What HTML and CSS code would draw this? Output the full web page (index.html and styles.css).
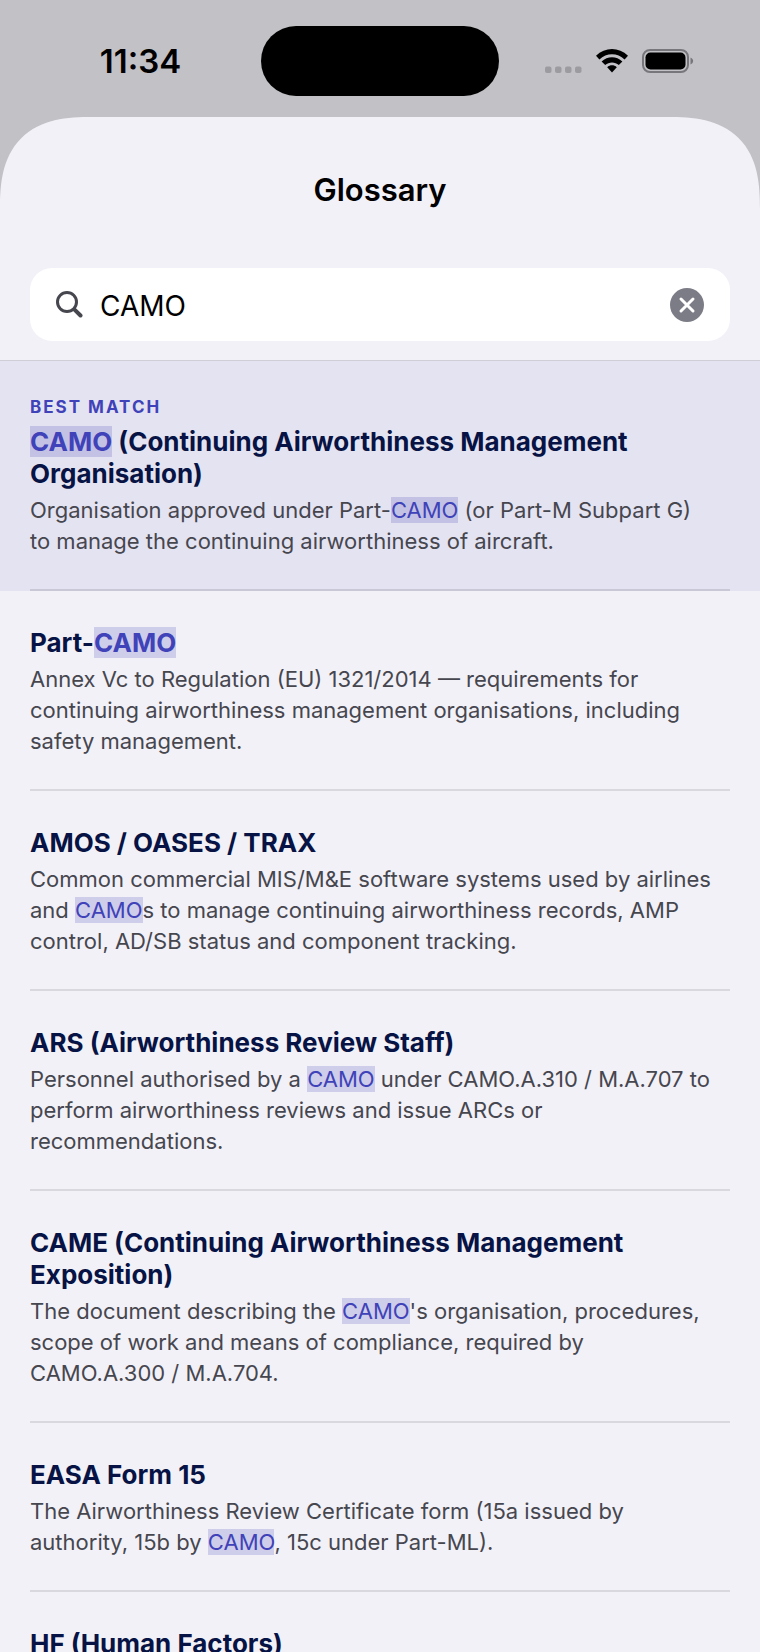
FILE: index.html
```html
<!DOCTYPE html>
<html lang="en">
  <head>
    <meta charset="UTF-8" />
    <meta name="viewport" content="width=device-width, initial-scale=1.0" />
    <title>Glossary</title>
    <link rel="stylesheet" href="styles.css">
  </head>
  <body>
    <div class="screen">
      <!-- Status bar -->
      <div class="status-bar">
        <div class="status-left">
          <span class="time">11:34</span>
        </div>
        <div class="island"></div>
        <div class="status-right">
          <svg class="cellular" width="37" height="24" viewBox="0 0 37 24" aria-hidden="true">
            <rect x="0" y="17.500" width="6.500" height="6.500" rx="2" />
            <rect x="10" y="17.500" width="6.500" height="6.500" rx="2" />
            <rect x="20" y="17.500" width="6.500" height="6.500" rx="2" />
            <rect x="30" y="17.500" width="6.500" height="6.500" rx="2" />
          </svg>
          <svg class="wifi" width="32" height="24" viewBox="0 0 32 24" aria-hidden="true">
            <path d="M0 6.8C9-2.2 23-2.2 32 6.8L28.6 10.4C21.500 3.400 10.500 3.400 3.400 10.400Z" />
            <path d="M5.600 12.500C11.500 6.700 20.500 6.700 26.400 12.500L22.800 16.100C19 12.500 13 12.500 9.200 16.100Z" />
            <path d="M11.200 18.200C14 15.700 18 15.700 20.800 18.200L16 23.400Z" />
          </svg>
          <svg class="battery" width="52" height="24" viewBox="0 0 52 24" aria-hidden="true">
            <rect class="battery-case" x="1" y="1" width="45" height="22" rx="7" />
            <rect x="3.500" y="3.500" width="40" height="17" rx="5" />
            <path class="battery-tip" d="M48.500 8.500C52 10 52 14 48.500 15.500Z" />
          </svg>
        </div>
      </div>

      <main class="sheet">
        <header class="sheet-header">
          <h1>Glossary</h1>
          <form class="search" role="search">
            <svg width="27" height="27" viewBox="0 0 27 27" aria-hidden="true">
              <circle cx="11" cy="11" r="9.500" />
              <path class="handle" d="M18.300 18.300L24.500 24.500" />
            </svg>
            <input type="text" value="CAMO" aria-label="Search glossary" />
            <button type="reset" class="clear-btn" aria-label="Clear search">
              <svg width="34" height="34" viewBox="0 0 34 34" aria-hidden="true">
                <circle cx="17" cy="17" r="17" />
                <path d="M11 11L23 23M23 11L11 23" />
              </svg>
            </button>
          </form>
        </header>

        <!-- Search results -->
        <section class="results">
          <article class="entry best">
            <p class="label">BEST MATCH</p>
            <h2><mark>CAMO</mark> (Continuing Airworthiness Management Organisation)</h2>
            <p>Organisation approved under Part-<mark>CAMO</mark> (or Part-M Subpart G) to manage the continuing airworthiness of aircraft.</p>
          </article>
          <article class="entry">
            <h2>Part-<mark>CAMO</mark></h2>
            <p>Annex Vc to Regulation (EU) 1321/2014 — requirements for continuing airworthiness management organisations, including safety management.</p>
          </article>
          <article class="entry">
            <h2>AMOS / OASES / TRAX</h2>
            <p>Common commercial MIS/M&amp;E software systems used by airlines and <mark>CAMO</mark>s to manage continuing airworthiness records, AMP control, AD/SB status and component tracking.</p>
          </article>
          <article class="entry">
            <h2>ARS (Airworthiness Review Staff)</h2>
            <p>Personnel authorised by a <mark>CAMO</mark> under CAMO.A.310 / M.A.707 to perform airworthiness reviews and issue ARCs or recommendations.</p>
          </article>
          <article class="entry">
            <h2>CAME (Continuing Airworthiness Management Exposition)</h2>
            <p>The document describing the <mark>CAMO</mark>'s organisation, procedures, scope of work and means of compliance, required by CAMO.A.300 / M.A.704.</p>
          </article>
          <article class="entry">
            <h2>EASA Form 15</h2>
            <p>The Airworthiness Review Certificate form (15a issued by authority, 15b by <mark>CAMO</mark>, 15c under Part-ML).</p>
          </article>
          <article class="entry">
            <h2>HF (Human Factors)</h2>
          </article>
        </section>
      </main>
    </div>
  </body>
</html>
```
FILE: styles.css
```css
* {
  box-sizing: border-box;
}

body {
  margin: 0;
  font-family: Inter, "Liberation Sans", sans-serif;
  background: #c2c1c6;
  color: #000;
}

.screen {
  display: flex;
  flex-direction: column;
  height: 100vh;
  overflow: hidden;
}

/* Status bar */
.status-bar {
  display: grid;
  grid-template-columns: 1fr 238px 1fr;
  align-items: center;
  flex: none;
  height: 117px;
  padding-top: 5px;
}

.status-left {
  padding-left: 20px;
  text-align: center;
}

.time {
  font-size: 33px;
  font-weight: 600;
}

.island {
  height: 70px;
  border-radius: 35px;
  background: #000;
}

.status-right {
  display: flex;
  align-items: center;
  justify-content: flex-end;
  gap: 14px;
  padding-right: 66px;
}

.cellular {
  fill: #9c9b9f;
}

.battery-case {
  fill: none;
  stroke: #77767a;
  stroke-width: 2;
}

.battery-tip {
  fill: #77767a;
}

/* Sheet */
.sheet {
  flex: 1;
  min-height: 0;
  overflow: hidden;
  border-radius: 72px 72px 0 0 / 76px 76px 0 0;
  background: #f2f1f7;
}

/* Smooth corners where the browser can draw them */
@supports (corner-shape: superellipse(1.4)) {
  .sheet {
    border-radius: 92px 92px 0 0;
    corner-shape: superellipse(1.4);
  }
}

.sheet-header {
  padding: 53px 30px 19px;
  border-bottom: 1px solid #cfced6;
}

h1 {
  margin: 0 0 58px;
  font-size: 31px;
  font-weight: 600;
  line-height: 40px;
  text-align: center;
}

.search {
  display: flex;
  align-items: center;
  height: 73px;
  padding: 0 26px;
  border-radius: 22px;
  background: #fff;
}

.search > svg {
  flex: none;
  fill: none;
  stroke: #46464f;
  stroke-width: 3;
}

.search .handle {
  stroke-width: 4;
  stroke-linecap: round;
}

.search input {
  flex: 1;
  min-width: 0;
  padding: 2px 17px 0;
  border: 0;
  outline: 0;
  background: none;
  color: #000;
  font-family: inherit;
  font-size: 28px;
}

.clear-btn {
  display: flex;
  padding: 0;
  border: 0;
  background: none;
  cursor: pointer;
}

.clear-btn circle {
  fill: #7c7c86;
}

.clear-btn path {
  stroke: #fff;
  stroke-width: 3;
  stroke-linecap: round;
}

/* Results */
.entry {
  padding: 36px 30px 0;
}

.entry::after {
  content: "";
  display: block;
  height: 2px;
  margin-top: 32px;
  background: #d9d8df;
}

.best {
  background: #e4e3f1;
}

.best::after {
  background: #c9c8d7;
}

.entry h2 {
  margin: 0 0 5px;
  color: #061344;
  font-size: 26px;
  font-weight: 700;
  line-height: 32px;
}

.entry p {
  margin: 0;
  padding-right: 16px;
  color: #46464f;
  font-size: 22px;
  line-height: 31px;
}

.entry .label {
  margin-bottom: 9px;
  color: #3f42b8;
  font-size: 17px;
  font-weight: 700;
  line-height: 20px;
  letter-spacing: 2px;
}

mark {
  background: rgba(63, 66, 184, 0.2);
  color: #3f42b8;
}
```
